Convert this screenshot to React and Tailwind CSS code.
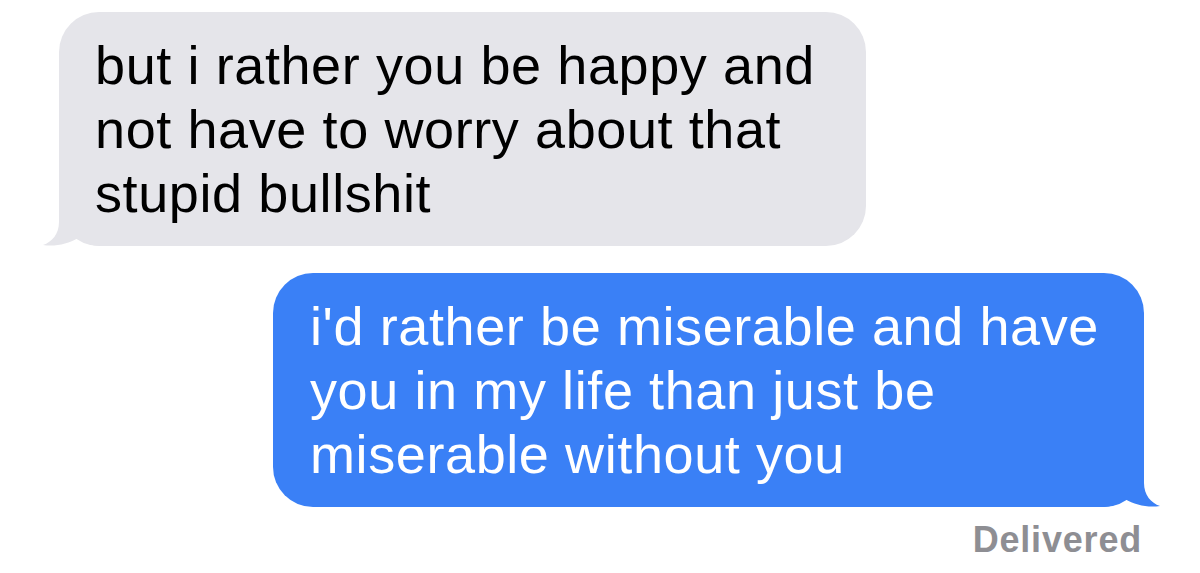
import React from "react";

function Tail({ color, side }) {
  // classic iMessage tail, drawn for the left side and mirrored for the right
  const pos = side === "left" ? "left-[-16px]" : "right-[-16px] -scale-x-100";
  return (
    <svg
      className={`absolute bottom-0 ${pos}`}
      width="57"
      height="41"
      viewBox="0 0 57 41"
    >
      <path
        d="M16 0 L16 17 C16 29 9 37 0 40 C12 42 25 39 35 33 C42 38 49 41 57 41 L57 0 Z"
        fill={color}
      />
    </svg>
  );
}

function App() {
  return (
    <div
      className="min-h-screen bg-white overflow-hidden"
      style={{ fontFamily: '"Liberation Sans", Arial, sans-serif' }}
    >
      {/* received */}
      <div className="pt-[12px] pl-[59px]">
        <div className="relative w-[807px] h-[234px] rounded-[40px] bg-[#e5e5ea] pl-[36px] pt-[21px] text-black text-[54px] leading-[64px] tracking-[0.6px]">
          <Tail color="#e5e5ea" side="left" />
          <p className="relative">
            but i rather you be happy and
            <br />
            not have to worry about that
            <br />
            stupid bullshit
          </p>
        </div>
      </div>

      {/* sent */}
      <div className="flex justify-end pr-[56px] mt-[27px]">
        <div className="relative w-[871px] h-[234px] rounded-[40px] bg-[#3a80f6] pl-[37px] pt-[21px] text-white text-[54px] leading-[64px] tracking-[0.6px]">
          <Tail color="#3a80f6" side="right" />
          <p className="relative">
            i'd rather be miserable and have
            <br />
            you in my life than just be
            <br />
            miserable without you
          </p>
        </div>
      </div>

      <div className="flex justify-end pr-[58px] mt-[13px]">
        <span className="text-[36px] leading-[40px] font-bold tracking-[0.8px] text-[#8e8e93]">
          Delivered
        </span>
      </div>
    </div>
  );
}

export default App;
